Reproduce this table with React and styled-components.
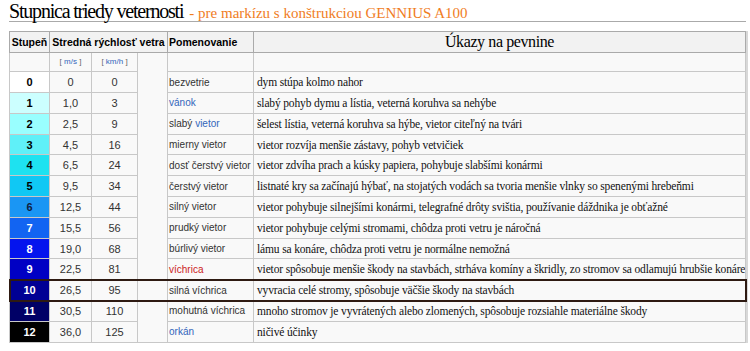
import React from "react";
import styled, { createGlobalStyle } from "styled-components";

const GlobalStyle = createGlobalStyle`
  html, body {
    margin: 0;
    padding: 0;
    background: #ffffff;
  }
`;

const Page = styled.div`
  width: 737px;
  padding: 0 0 0 9px;
`;

const TitleBar = styled.div`
  display: flex;
  align-items: baseline;
  gap: 6px;
  height: 22px;
  border-bottom: 1px solid #aaaaaa;
  margin-bottom: 9px;
  box-sizing: border-box;
  padding-top: 1px;
`;

const Title = styled.h1`
  margin: 0;
  font-family: "Liberation Serif", "Times New Roman", serif;
  font-weight: normal;
  font-size: 20px;
  line-height: 20px;
  letter-spacing: -1.2px;
  color: #000000;
`;

const Subtitle = styled.span`
  font-family: "Liberation Serif", "Times New Roman", serif;
  font-size: 15px;
  line-height: 20px;
  color: #f07d1e;
`;

const WindTable = styled.table`
  width: 737px;
  border-collapse: collapse;
  table-layout: fixed;
  background: #f9f9f9;
  border: 1px solid #aaaaaa;
  box-shadow: 2px 0 0 #d8d8d8;
  font-family: "Liberation Sans", Arial, sans-serif;
  color: #333333;
`;

const Row = styled.tr`
  ${(p) => p.$marked && `outline: 2px solid #2e1a12; outline-offset: -1px;`}
`;

const Th = styled.th`
  height: 19.5px;
  padding: 0 1px;
  border: 1px solid #aaaaaa;
  background: #f2f2f2;
  font-size: 10.5px;
  font-weight: bold;
  color: #000000;
  text-align: ${(p) => p.$align || "center"};
  white-space: nowrap;
  overflow: hidden;
`;

const BigTh = styled(Th)`
  font-family: "Liberation Serif", "Times New Roman", serif;
  font-weight: normal;
  font-size: 16px;
  letter-spacing: -0.4px;
`;

const Td = styled.td`
  height: ${(p) => (p.$short ? "18.8px" : "19.8px")};
  padding: 0;
  border: 1px solid #c8c8c8;
  font-size: 11px;
  text-align: ${(p) => p.$align || "center"};
  white-space: nowrap;
  overflow: hidden;
`;

const LevelCell = styled(Td)`
  background: ${(p) => p.$bg};
  color: ${(p) => p.$fg};
  font-weight: bold;
`;

const UnitCell = styled(Td)`
  font-size: 8px;
  color: #666666;
  & span {
    color: #3366bb;
  }
`;

const SpacerCell = styled.td`
  border: 1px solid #c8c8c8;
  background: #f9f9f9;
`;

const NameCell = styled(Td)`
  text-align: left;
  padding-left: 1px;
  font-size: 10px;
  color: #333333;
`;

const Link = styled.span`
  color: ${(p) => (p.$missing ? "#cc2222" : "#3366bb")};
`;

const EffectCell = styled(Td)`
  text-align: left;
  padding-left: 3px;
  font-family: "Liberation Serif", "Times New Roman", serif;
  font-size: 11.5px;
  letter-spacing: -0.15px;
  color: #111111;
`;

const rows = [
  { level: 0, bg: "#ffffff", fg: "#000", ms: "0", kmh: "0", name: "bezvetrie", effect: "dym stúpa kolmo nahor" },
  { level: 1, bg: "#ccffff", fg: "#000", ms: "1,0", kmh: "3", name: <Link>vánok</Link>, effect: "slabý pohyb dymu a lístia, veterná koruhva sa nehýbe" },
  { level: 2, bg: "#99ffff", fg: "#000", ms: "2,5", kmh: "9", name: <>slabý <Link>vietor</Link></>, effect: "šelest lístia, veterná koruhva sa hýbe, vietor citeľný na tvári" },
  { level: 3, bg: "#5ff0f8", fg: "#000", ms: "4,5", kmh: "16", name: "mierny vietor", effect: "vietor rozvíja menšie zástavy, pohyb vetvičiek" },
  { level: 4, bg: "#1ee2f0", fg: "#000", ms: "6,5", kmh: "24", name: "dosť čerstvý vietor", effect: "vietor zdvíha prach a kúsky papiera, pohybuje slabšími konármi" },
  { level: 5, bg: "#10c8f4", fg: "#000", ms: "9,5", kmh: "34", name: "čerstvý vietor", effect: "listnaté kry sa začínajú hýbať, na stojatých vodách sa tvoria menšie vlnky so spenenými hrebeňmi" },
  { level: 6, bg: "#1a96f4", fg: "#102040", ms: "12,5", kmh: "44", name: "silný vietor", effect: "vietor pohybuje silnejšími konármi, telegrafné drôty svištia, používanie dáždnika je obťažné" },
  { level: 7, bg: "#1264f2", fg: "#ffffff", ms: "15,5", kmh: "56", name: "prudký vietor", effect: "vietor pohybuje celými stromami, chôdza proti vetru je náročná" },
  { level: 8, bg: "#0414ee", fg: "#ffffff", ms: "19,0", kmh: "68", name: "búrlivý vietor", effect: "lámu sa konáre, chôdza proti vetru je normálne nemožná" },
  { level: 9, bg: "#0000c4", fg: "#ffffff", ms: "22,5", kmh: "81", name: <Link $missing>víchrica</Link>, effect: "vietor spôsobuje menšie škody na stavbách, strháva komíny a škridly, zo stromov sa odlamujú hrubšie konáre" },
  { level: 10, bg: "#000094", fg: "#ffffff", ms: "26,5", kmh: "95", name: "silná víchrica", effect: "vyvracia celé stromy, spôsobuje väčšie škody na stavbách", marked: true },
  { level: 11, bg: "#000066", fg: "#ffffff", ms: "30,5", kmh: "110", name: "mohutná víchrica", effect: "mnoho stromov je vyvrátených alebo zlomených, spôsobuje rozsiahle materiálne škody" },
  { level: 12, bg: "#000000", fg: "#ffffff", ms: "36,0", kmh: "125", name: <Link>orkán</Link>, effect: "ničivé účinky" },
];

export default function App() {
  return (
    <>
      <GlobalStyle />
      <Page>
        <TitleBar>
          <Title>Stupnica triedy veternosti</Title>
          <Subtitle>- pre markízu s konštrukciou GENNIUS A100</Subtitle>
        </TitleBar>
        <WindTable>
          <colgroup>
            <col style={{ width: 40 }} />
            <col style={{ width: 42 }} />
            <col style={{ width: 46 }} />
            <col style={{ width: 30 }} />
            <col style={{ width: 86 }} />
            <col />
          </colgroup>
          <thead>
            <tr>
              <Th>Stupeň</Th>
              <Th colSpan={3}>Stredná rýchlosť vetra</Th>
              <Th $align="left">Pomenovanie</Th>
              <BigTh>Úkazy na pevnine</BigTh>
            </tr>
          </thead>
          <tbody>
            <tr>
              <Td $short />
              <UnitCell $short>[ <span>m/s</span> ]</UnitCell>
              <UnitCell $short>[ <span>km/h</span> ]</UnitCell>
              <SpacerCell rowSpan={14} />
              <Td $short />
              <Td $short />
            </tr>
            {rows.map((r) => (
              <Row key={r.level} $marked={r.marked}>
                <LevelCell $bg={r.bg} $fg={r.fg}>{r.level}</LevelCell>
                <Td>{r.ms}</Td>
                <Td>{r.kmh}</Td>
                <NameCell>{r.name}</NameCell>
                <EffectCell>{r.effect}</EffectCell>
              </Row>
            ))}
          </tbody>
        </WindTable>
      </Page>
    </>
  );
}
